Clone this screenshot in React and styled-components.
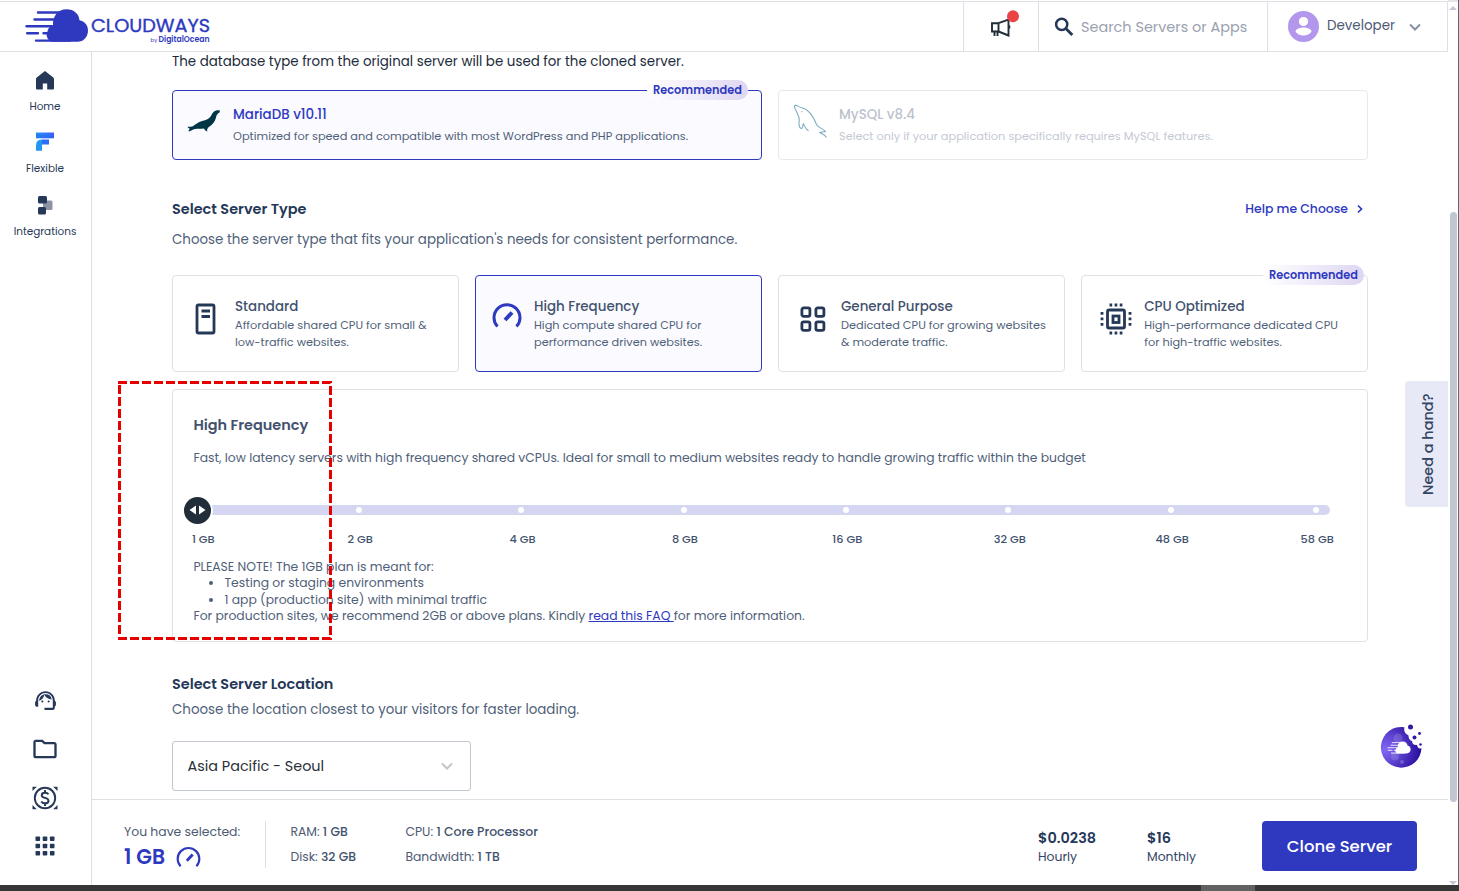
import React from "react";
import styled, { createGlobalStyle } from "styled-components";
import { MdSupportAgent, MdOutlineFolder } from "react-icons/md";

const GlobalStyle = createGlobalStyle`
  * {
    box-sizing: border-box;
  }

  body {
    margin: 0;
    background-color: #ffffff;
    font-family: Poppins, Inter, "Open Sans", sans-serif;
    color: #4d5a73;
  }

  h2, h3, h4, p, ul {
    margin: 0;
    padding: 0;
    font-weight: 400;
  }
`;

const Screen = styled.div`
  display: grid;
  grid-template-columns: 1448px 10px 1px;
  grid-template-rows: 885px 6px;
  width: 1459px;
  height: 891px;
  overflow: hidden;
`;

const Page = styled.div`
  display: flex;
  flex-direction: column;
  position: relative;
  border-top: 1px solid #ffffff;
`;

const Scrollbar = styled.div`
  display: flex;
  flex-direction: column;
  align-items: center;
  border-top: 2px solid #e4e5e9;
  padding-top: 4px;
`;

const ArrowUp = styled.div`
  border: 4px solid transparent;
  border-top: 0;
  border-bottom: 4px solid #c1c7d0;
`;

const ArrowDown = styled(ArrowUp)`
  margin-top: auto;
  transform: rotate(180deg);
`;

const Thumb = styled.div`
  width: 7px;
  height: 590px;
  margin-top: 202px;
  border-radius: 4px;
  background-color: #c1c7d0;
`;

const WindowEdge = styled.div`
  background-color: #62666f;
`;

const Taskbar = styled.div`
  grid-column: 1 / -1;
  background-color: #363636;
  padding-left: 1201px;
`;

const TaskbarItem = styled.div`
  width: 54px;
  height: 6px;
  background-color: #626262;
`;

const Header = styled.header`
  display: flex;
  height: 51px;
  flex-shrink: 0;
  border-top: 1px solid #dfe0e5;
  border-bottom: 1px solid #dfe0e5;
`;

const Brand = styled.div`
  flex: 1;
  padding: 2px 0 0 20px;
`;

const HeaderCell = styled.div`
  display: flex;
  align-items: center;
  width: ${(props) => props.$width}px;
  border-left: 1px solid #dfe0e5;
  padding-left: ${(props) => props.$pad}px;
`;

const SearchHint = styled.span`
  margin-left: 7px;
  font-size: 14.45px;
  line-height: 22px;
  color: #9aa1b0;
`;

const UserName = styled.span`
  width: 68px;
  margin: 0 14px 2px 8px;
  font-size: 13.44px;
  white-space: nowrap;
`;

const Body = styled.div`
  display: flex;
  flex: 1;
  min-height: 0;
`;

const Sidebar = styled.nav`
  display: flex;
  flex-direction: column;
  justify-content: space-between;
  width: 92px;
  padding-right: 1px;
  border-right: 1px solid #dfe0e5;
`;

const NavTop = styled.div`
  display: flex;
  flex-direction: column;
  padding-top: 16px;
`;

const NavItem = styled.a`
  display: flex;
  flex-direction: column;
  align-items: center;
  height: 62.3px;
  font-size: 10.45px;
  line-height: 16px;
  color: #253858;

  svg {
    margin-bottom: 7px;
  }
`;

const NavBottom = styled.div`
  display: flex;
  flex-direction: column;
  align-items: center;
  height: 198.6px;
  color: #253858;
`;

const NavIcon = styled.a`
  display: flex;
  align-items: center;
  justify-content: center;
  height: 28px;
  margin-bottom: 20.6px;
`;

const Column = styled.div`
  display: flex;
  flex-direction: column;
  width: 1356px;
`;

const Main = styled.main`
  height: 747px;
  padding: 0 80px;
  overflow: hidden;
`;

const Intro = styled.p`
  height: 38px;
  padding-top: 1px;
  font-size: 13.42px;
  line-height: 18px;
  color: #222b3a;
`;

const CardRow = styled.div`
  display: grid;
  grid-template-columns: repeat(${(props) => props.$columns}, 1fr);
  gap: 16px;
`;

const Card = styled.div`
  position: relative;
  display: flex;
  min-width: 0;
  border: 1px solid ${(props) => (props.$active ? "#2e39bf" : "#dfe1e6")};
  border-radius: 4px;
  background-color: ${(props) => (props.$active ? "#fafaff" : "#ffffff")};
`;

const DatabaseCard = styled(Card)`
  height: 70px;
  padding: 14px 0 0 ${(props) => props.$pad}px;
  gap: ${(props) => props.$gap}px;
  border-color: ${(props) => (props.$disabled ? "#e6e8ec" : "#2e39bf")};

  & > svg {
    margin-top: ${(props) => props.$iconTop}px;
    opacity: ${(props) => (props.$disabled ? 0.8 : 1)};
  }
`;

const TypeCard = styled(Card)`
  height: 97px;
  padding: 21px 0 0 ${(props) => props.$pad}px;
  gap: ${(props) => props.$gap}px;

  & > svg {
    flex-shrink: 0;
    margin-top: ${(props) => props.$iconTop}px;
  }
`;

const Badge = styled.span`
  position: absolute;
  top: -11px;
  right: ${(props) => props.$right}px;
  width: 101px;
  height: 20px;
  padding-left: 6px;
  border-radius: 10px;
  background: linear-gradient(90deg, #ffffff, #ded6f2);
  font-size: 11.34px;
  font-weight: 600;
  line-height: 20px;
  color: #2e39bf;
`;

const CardTitle = styled.h4`
  font-size: 13.42px;
  font-weight: 500;
  line-height: 20px;
  white-space: nowrap;
  color: ${(props) => props.$color || "#42526e"};
`;

const CardText = styled.p`
  margin-top: ${(props) => props.$top || 0}px;
  font-size: 11.34px;
  line-height: 17px;
  white-space: nowrap;
  color: ${(props) => props.$color || "#505f79"};
`;

const SectionHead = styled.div`
  display: flex;
  justify-content: space-between;
  align-items: center;
  height: 24px;
  margin-top: ${(props) => props.$top}px;
`;

const SectionTitle = styled.h2`
  font-size: 14.45px;
  font-weight: 600;
  color: #253858;
`;

const SectionText = styled.p`
  margin: ${(props) => props.$margin};
  font-size: 13.42px;
  line-height: 20px;
  color: #505f79;
`;

const HelpLink = styled.a`
  display: flex;
  align-items: center;
  gap: 9px;
  padding-right: 5px;
  font-size: 12.4px;
  font-weight: 500;
  color: #2e39bf;
`;

const Panel = styled.section`
  height: 253px;
  margin-top: 17px;
  padding: 23px 0 0 20.4px;
  border: 1px solid #dfe1e6;
  border-radius: 4px;
`;

const PanelTitle = styled.h3`
  font-size: 14.45px;
  font-weight: 600;
  line-height: 24px;
  color: #42526e;
`;

const PanelText = styled.p`
  margin-top: 11px;
  font-size: 12.38px;
  line-height: 20px;
  color: #505f79;
`;

const Track = styled.div`
  display: grid;
  grid-template-columns: repeat(6, 162.4px) 145px 17px;
  grid-template-rows: 10px;
  align-items: center;
  width: 1137px;
  height: 10px;
  margin-top: 37px;
  border-radius: 5px;
  background-color: #d5d6f2;
`;

const Stop = styled.span`
  width: 6px;
  height: 6px;
  border-radius: 50%;
  background-color: #ffffff;
`;

const Handle = styled.span`
  display: flex;
  align-items: center;
  justify-content: center;
  gap: 3px;
  width: 27px;
  height: 27px;
  margin-left: -9.4px;
  border-radius: 50%;
  background-color: #212d38;
  box-shadow: 1px 0 0 1px #ffffff;
`;

const Labels = styled.div`
  display: grid;
  grid-template-columns: repeat(6, 162.4px) 145px 48px;
  margin: 14px 0 0 -19.6px;
  font-size: 11.34px;
  font-weight: 500;
  line-height: 20px;
  color: #42526e;
`;

const Label = styled.span`
  width: 48px;
  text-align: center;

  &:first-child {
    padding-left: 11px;
  }
`;

const Note = styled.div`
  margin-top: 10px;
  font-size: 12.38px;
  line-height: 16.4px;
  color: #505f79;

  ul {
    padding-left: 31px;
  }

  a {
    color: #2e39bf;
    text-decoration: underline;
  }
`;

const Select = styled.div`
  display: flex;
  align-items: center;
  justify-content: space-between;
  width: 299px;
  height: 50px;
  padding: 0 16px 0 14.5px;
  border: 1px solid #c1c7d0;
  border-radius: 3px;
  font-size: 14.4px;
  color: #2b2f38;
`;

const Footer = styled.footer`
  display: flex;
  height: 86px;
  border-top: 1px solid #dfe0e5;
  padding: 21px 31px 0 32px;
`;

const Selected = styled.div`
  width: 142px;
  height: 47px;
  border-right: 1px solid #dfe0e5;
  font-size: 12.38px;
  line-height: 22px;
`;

const Plan = styled.div`
  display: flex;
  align-items: center;
  gap: 10.5px;
  margin-top: 1px;
  font-size: 20.4px;
  font-weight: 600;
  line-height: 26px;
  color: #2e39bf;
`;

const Specs = styled.div`
  display: flex;
  flex-direction: column;
  gap: 3px;
  width: ${(props) => props.$width}px;
  padding-left: ${(props) => props.$pad}px;
  font-size: 12.38px;
  line-height: 22px;

  b {
    font-weight: 500;
    color: #42526e;
  }
`;

const Price = styled.div`
  width: ${(props) => props.$width}px;
  padding-top: 8px;
  font-size: 12.38px;
  line-height: 17px;
  color: #344563;

  b {
    display: block;
    font-size: 14.45px;
    font-weight: 600;
    line-height: 19px;
    color: #253858;
  }
`;

const CloneButton = styled.button`
  width: 155px;
  height: 50px;
  border: 0;
  border-radius: 4px;
  background-color: #2e39bf;
  color: #ffffff;
  font-family: inherit;
  font-size: 16.5px;
  font-weight: 500;
`;

/* rotated by half a turn, so the text reads from the bottom up */
const HelpTab = styled.button`
  position: absolute;
  top: 380px;
  right: 0;
  width: 43px;
  height: 126px;
  padding: 0 3px 0 0;
  border: 0;
  border-radius: 0 4px 4px 0;
  background-color: #e8e9f7;
  color: #344563;
  font-family: inherit;
  font-size: 14.45px;
  font-weight: 500;
  writing-mode: vertical-rl;
  transform: rotate(180deg);
`;

const CookieButton = styled.div`
  position: absolute;
  top: 721px;
  left: 1380px;
  line-height: 0;
`;

const Highlight = styled.svg`
  position: absolute;
  top: 380px;
  left: 118px;
  pointer-events: none;
`;

function CloudShape() {
  return (
    <>
      <path d="M32 37.8 C27 36 25.500 31 27.500 27.500 C28 25 29 22.500 33 21.500 C32.500 12 38 5.300 46.500 5.300 C54 5.300 59 10 59.500 16.200 C64.500 17 68 21 68 26.500 C68 33 63.500 37.800 57.500 37.800 H32 Z" />
      <g fill="none" stroke="currentColor" strokeWidth="2.400" strokeLinecap="round">
        <path d="M18 8.500H40M14.500 15.500H36M6.500 22.300H32M7.200 29.200H18M23.500 29.200H30M16 36.600H50" />
      </g>
    </>
  );
}

function Logo() {
  return (
    <svg width="200" height="44" viewBox="0 0 200 44" fill="#2e39bf" color="#2e39bf">
      <CloudShape />
      <text x="71" y="28" fontFamily="Poppins" fontSize="18.500" stroke="#2e39bf" strokeWidth="0.350" textLength="119" lengthAdjust="spacingAndGlyphs">
        CLOUDWAYS
      </text>
      <text x="130.500" y="37.500" fontFamily="Poppins" fontSize="5.500">
        by
      </text>
      <text x="138.500" y="37.500" fontFamily="Poppins" fontSize="7.800" fontWeight="600" textLength="51" lengthAdjust="spacingAndGlyphs">
        DigitalOcean
      </text>
    </svg>
  );
}

function SearchIcon() {
  return (
    <svg width="20" height="20" viewBox="0 0 20 20" fill="none" stroke="#253858" strokeWidth="2.500">
      <circle cx="7.700" cy="7.300" r="5.600" />
      <path d="M11.800 11.500L18.300 18" strokeWidth="2.800" />
    </svg>
  );
}

function Gauge({ size, weight }) {
  return (
    <svg width={size} height={size} viewBox="0 0 30 30" fill="none" stroke="#2e39bf" strokeWidth={weight}>
      <path d="M5.500 25.500A13 13 0 1 1 24.500 25.500" />
      <path d="M13 19L20 11.500" strokeWidth={weight * 1.3} />
    </svg>
  );
}

function Chevron({ color, width = 12, stroke = 2 }) {
  return (
    <svg width={width} height="8" viewBox="0 0 12 8" fill="none" stroke={color} strokeWidth={stroke}>
      <path d="M1 1.500L6 6.500L11 1.500" />
    </svg>
  );
}

function HomeIcon() {
  return (
    <svg width="20" height="24" viewBox="0 0 20 24" fill="#253858">
      <path d="M10 3L18.300 9.500Q19 10 19 11V20.500Q19 21.500 18 21.500H12.200V15.500H7.800V21.500H2Q1 21.500 1 20.500V11Q1 10 1.700 9.500Z" />
    </svg>
  );
}

function FlexibleIcon() {
  return (
    <svg width="20" height="24" viewBox="0 0 20 24">
      <defs>
        <linearGradient id="flex" x1="0" x2="1">
          <stop offset="0" stopColor="#1f9cf5" />
          <stop offset="1" stopColor="#3b5bfa" />
        </linearGradient>
      </defs>
      <path d="M1 2.500H19V8.200H1Z" fill="url(#flex)" />
      <path d="M1 3.500L19 7V8.200H1Z" fill="#2a6bf0" opacity="0.600" />
      <path d="M7 9.500H14V14.500H7Z" fill="#2b6df5" />
      <path d="M7 9.500V20.800H1V15.500Q1 9.500 7 9.500Z" fill="#2196f3" />
    </svg>
  );
}

function IntegrationsIcon() {
  return (
    <svg width="20" height="24" viewBox="0 0 20 24">
      <rect x="8" y="7.500" width="9.500" height="9.500" rx="1.500" fill="#8b93a5" />
      <rect x="3" y="3" width="9" height="7.500" rx="1.500" fill="#253858" />
      <rect x="3" y="14" width="8" height="7.500" rx="1.500" fill="#253858" />
    </svg>
  );
}

function BillingIcon() {
  return (
    <svg width="26" height="26" viewBox="0 0 26 26" fill="none" stroke="#253858" strokeWidth="1.900">
      <circle cx="13" cy="13" r="10.200" />
      <path d="M16.500 9.300Q15.500 7.700 13 7.700Q9.700 7.700 9.700 10.200Q9.700 12.200 13 12.900Q16.500 13.700 16.500 15.900Q16.500 18.300 13 18.300Q10.300 18.300 9.300 16.500M13 5V7.800M13 18.200V21" />
      <path d="M0.500 1.800H4.800L0.500 6ZM25.500 1.800H21.200L25.500 6ZM0.500 24.200H4.800L0.500 20ZM25.500 24.200H21.200L25.500 20Z" fill="#253858" stroke="none" />
    </svg>
  );
}

function AppsIcon() {
  return (
    <svg width="20" height="20" viewBox="0 0 20 20" fill="#253858">
      {[0.5, 7.7, 14.9].map((y) =>
        [0.5, 7.7, 14.9].map((x) => <rect key={`${x}-${y}`} x={x} y={y} width="4.600" height="4.600" rx="0.800" />)
      )}
    </svg>
  );
}

function SealIcon() {
  return (
    <svg width="34" height="26" viewBox="0 0 34 26" fill="#003545">
      <path d="M33 1.500C30 0.500 26.500 1.500 25 5C23.500 8.500 21.500 10.200 18 11.200C14 12.300 10.500 13.500 7.500 16C5.500 17.800 4 18 0.500 17.800C1 19 2.300 19.600 3 19.800C2 20.500 1.500 21.300 1.700 22.500C4 22.300 5.500 20.500 8 20C11 19.700 14 20 17 19.500C17.500 21 19 22 20.500 22.600C19.700 21.200 20 20 21.500 18.200C25.500 16 28 12.500 29 8.500C29.500 6 30.500 4.500 32.500 3.500Z" />
    </svg>
  );
}

function DolphinIcon() {
  return (
    <svg width="34" height="36" viewBox="0 0 34 36" fill="none" stroke="#5b9ab0" strokeWidth="1.100" strokeLinejoin="round">
      <path d="M32.500 33.500C31 31 29 30 25.500 28.500L31.500 27.500C28 24 24.500 23.500 22.800 21C20 14 16 5.500 8 3.800C5 3.500 3.500 1 1 1.200C0 2.500 1.200 5.500 2.500 7.500C4.500 11.500 5.700 13.500 5.200 17C4.500 21 5.500 24.500 7.500 24.500C9 24 9 21.500 9.200 19.500C10.500 22 11.500 25 14.500 27" />
      <path d="M7.500 7.300L8.300 8" />
    </svg>
  );
}

function StandardIcon() {
  return (
    <svg width="22" height="32" viewBox="0 0 22 32" fill="none" stroke="#253858" strokeWidth="2.800">
      <rect x="2" y="2" width="17" height="28" rx="1.500" />
      <path d="M6.500 8H15M6.500 13.500H15" />
    </svg>
  );
}

function GeneralIcon() {
  return (
    <svg width="26" height="28" viewBox="0 0 26 28" fill="none" stroke="#253858" strokeWidth="2.800">
      <rect x="1.900" y="2.900" width="8" height="8.500" rx="1.800" />
      <rect x="15.900" y="2.900" width="8" height="8.500" rx="1.800" />
      <rect x="1.900" y="16.800" width="8" height="8.500" rx="1.800" />
      <rect x="15.900" y="16.800" width="8" height="8.500" rx="1.800" />
    </svg>
  );
}

function CpuIcon() {
  return (
    <svg width="32" height="32" viewBox="0 0 32 32" fill="none" stroke="#253858" strokeWidth="2.800">
      <rect x="7.500" y="7" width="17" height="18" rx="1.500" />
      <rect x="13" y="13" width="6" height="6.500" />
      <path d="M9.500 2H22.500M9.500 30H22.500" strokeDasharray="2.700 2.400" />
      <path d="M2 9V23M30 9V23" strokeDasharray="2.700 2.800" />
    </svg>
  );
}

function MegaphoneIcon() {
  return (
    <svg width="32" height="36" viewBox="0 0 32 36" fill="none" stroke="#212d38" strokeWidth="1.900">
      <path d="M4 14.200H10.500V22.500H4ZM10.500 14.200L20.500 10.500V26.500L10.500 22.500M6.500 22.500V27M9.500 22.500V27M21.300 16.500V19.500" />
      <circle cx="25" cy="7.300" r="6" fill="#e94545" stroke="none" />
    </svg>
  );
}

function Avatar() {
  return (
    <svg width="31" height="31" viewBox="0 0 31 31" fill="#ffffff">
      <circle cx="15.500" cy="15.500" r="15.500" fill="#b297ec" />
      <circle cx="15.500" cy="10.500" r="4.600" />
      <path d="M7.500 20.500C8 17.500 12.500 16.500 15.500 16.500S23 17.500 23.500 20.500C22 23 19 24.500 15.500 24.500S9 23 7.500 20.500Z" />
    </svg>
  );
}

function CookieIcon() {
  return (
    <svg width="44" height="46" viewBox="0 0 44 46" fill="#2f1aa0">
      <defs>
        <radialGradient id="cookie" cx="0.100" cy="0.550" r="0.850">
          <stop offset="0" stopColor="#8468f5" />
          <stop offset="1" stopColor="#2c10a0" />
        </radialGradient>
      </defs>
      <path d="M24.500 5.300A20.300 20.300 0 1 0 41.500 26C39 27.500 37.500 25.500 37 23C34 23.500 32 21.500 32 19C29.500 18 28.500 16.500 28.500 13.500C25 12 23.500 8.500 24.500 5.300Z" fill="url(#cookie)" />
      <circle cx="18" cy="16" r="4.500" fill="#ffffff" opacity="0.150" />
      <circle cx="15" cy="34.500" r="4" fill="#ffffff" opacity="0.150" />
      <circle cx="22" cy="40" r="2" fill="#ffffff" opacity="0.200" />
      <circle cx="30.500" cy="5" r="2.500" />
      <circle cx="39.500" cy="11.500" r="1.400" />
      <circle cx="34.500" cy="15.500" r="2" />
      <circle cx="40.500" cy="22.500" r="1.300" />
      <g transform="translate(5.500 17.500) scale(0.370)" fill="#ffffff" color="#ffffff">
        <CloudShape />
      </g>
    </svg>
  );
}

const serverTypes = [
  { title: "Standard", lines: ["Affordable shared CPU for small &", "low-traffic websites."], icon: <StandardIcon />, pad: 22, gap: 18, iconTop: 6 },
  { title: "High Frequency", lines: ["High compute shared CPU for", "performance driven websites."], icon: <Gauge size={30} weight={3} />, pad: 15.5, gap: 12.5, iconTop: 4, active: true },
  { title: "General Purpose", lines: ["Dedicated CPU for growing websites", "& moderate traffic."], icon: <GeneralIcon />, pad: 20.5, gap: 15.5, iconTop: 8 },
  { title: "CPU Optimized", lines: ["High-performance dedicated CPU", "for high-traffic websites."], icon: <CpuIcon />, pad: 17.5, gap: 12.7, iconTop: 6, recommended: true },
];

const sizes = ["1 GB", "2 GB", "4 GB", "8 GB", "16 GB", "32 GB", "48 GB", "58 GB"];

function App() {
  return (
    <Screen>
      <GlobalStyle />
      <Page>
        <Header>
          <Brand>
            <Logo />
          </Brand>
          <HeaderCell $width={75} $pad={24}>
            <MegaphoneIcon />
          </HeaderCell>
          <HeaderCell $width={229} $pad={15}>
            <SearchIcon />
            <SearchHint>Search Servers or Apps</SearchHint>
          </HeaderCell>
          <HeaderCell $width={180} $pad={20}>
            <Avatar />
            <UserName>Developer</UserName>
            <Chevron color="#8891a3" />
          </HeaderCell>
          <HeaderCell $width={1} $pad={0} />
        </Header>
        <Body>
          <Sidebar>
            <NavTop>
              <NavItem>
                <HomeIcon />
                Home
              </NavItem>
              <NavItem>
                <FlexibleIcon />
                Flexible
              </NavItem>
              <NavItem>
                <IntegrationsIcon />
                Integrations
              </NavItem>
            </NavTop>
            <NavBottom>
              <NavIcon>
                <MdSupportAgent size={25} />
              </NavIcon>
              <NavIcon>
                <MdOutlineFolder size={28} />
              </NavIcon>
              <NavIcon>
                <BillingIcon />
              </NavIcon>
              <NavIcon>
                <AppsIcon />
              </NavIcon>
            </NavBottom>
          </Sidebar>
          <Column>
            <Main>
              <Intro>The database type from the original server will be used for the cloned server.</Intro>
              <CardRow $columns={2}>
                <DatabaseCard $active $pad={14} $gap={12} $iconTop={4}>
                  <SealIcon />
                  <div>
                    <CardTitle $color="#2e39bf">MariaDB v10.11</CardTitle>
                    <CardText $top={3}>Optimized for speed and compatible with most WordPress and PHP applications.</CardText>
                  </div>
                  <Badge $right={13}>Recommended</Badge>
                </DatabaseCard>
                <DatabaseCard $disabled $pad={15} $gap={11} $iconTop={-1}>
                  <DolphinIcon />
                  <div>
                    <CardTitle $color="#bcc2ce">MySQL v8.4</CardTitle>
                    <CardText $top={3} $color="#c4c9d3">
                      Select only if your application specifically requires MySQL features.
                    </CardText>
                  </div>
                </DatabaseCard>
              </CardRow>
              <SectionHead $top={37}>
                <SectionTitle>Select Server Type</SectionTitle>
                <HelpLink>
                  Help me Choose
                  <svg width="6" height="10" viewBox="0 0 6 10" fill="none" stroke="#2e39bf" strokeWidth="1.700">
                    <path d="M1 1.500L4.500 5L1 8.500" />
                  </svg>
                </HelpLink>
              </SectionHead>
              <SectionText $margin="8.500px 0 25.500px">
                Choose the server type that fits your application's needs for consistent performance.
              </SectionText>
              <CardRow $columns={4}>
                {serverTypes.map((type) => (
                  <TypeCard key={type.title} $active={type.active} $pad={type.pad} $gap={type.gap} $iconTop={type.iconTop}>
                    {type.icon}
                    <div>
                      <CardTitle>{type.title}</CardTitle>
                      {type.lines.map((line) => (
                        <CardText key={line}>{line}</CardText>
                      ))}
                    </div>
                    {type.recommended && <Badge $right={3}>Recommended</Badge>}
                  </TypeCard>
                ))}
              </CardRow>
              <Panel>
                <PanelTitle>High Frequency</PanelTitle>
                <PanelText>
                  Fast, low latency servers with high frequency shared vCPUs. Ideal for small to medium websites ready to handle growing traffic within the budget
                </PanelText>
                <Track>
                  <Handle>
                    <svg width="17" height="10" viewBox="0 0 17 10" fill="#ffffff">
                      <path d="M7 0.500V9.500L0.500 5ZM10 0.500V9.500L16.500 5Z" />
                    </svg>
                  </Handle>
                  {sizes.slice(1).map((size) => (
                    <Stop key={size} />
                  ))}
                </Track>
                <Labels>
                  {sizes.map((size) => (
                    <Label key={size}>{size}</Label>
                  ))}
                </Labels>
                <Note>
                  <p>PLEASE NOTE! The 1GB plan is meant for:</p>
                  <ul>
                    <li>Testing or staging environments</li>
                    <li>1 app (production site) with minimal traffic</li>
                  </ul>
                  <p>
                    For production sites, we recommend 2GB or above plans. Kindly <a>read this FAQ </a>for more information.
                  </p>
                </Note>
              </Panel>
              <SectionHead $top={30}>
                <SectionTitle>Select Server Location</SectionTitle>
              </SectionHead>
              <SectionText $margin="3.500px 0 21.500px">Choose the location closest to your visitors for faster loading.</SectionText>
              <Select>
                Asia Pacific - Seoul
                <Chevron color="#c4c4c8" width={14} />
              </Select>
            </Main>
            <Footer>
              <Selected>
                You have selected:
                <Plan>
                  1 GB <Gauge size={25} weight={2.6} />
                </Plan>
              </Selected>
              <Specs $width={139} $pad={24.4}>
                <span>RAM: <b>1 GB</b></span>
                <span>Disk: <b>32 GB</b></span>
              </Specs>
              <Specs $width={633} $pad={0.4}>
                <span>CPU: <b>1 Core Processor</b></span>
                <span>Bandwidth: <b>1 TB</b></span>
              </Specs>
              <Price $width={109}>
                <b>$0.0238</b>
                Hourly
              </Price>
              <Price $width={115}>
                <b>$16</b>
                Monthly
              </Price>
              <CloneButton>Clone Server</CloneButton>
            </Footer>
          </Column>
        </Body>
        <HelpTab>Need a hand?</HelpTab>
        <CookieButton>
          <CookieIcon />
        </CookieButton>
        <Highlight width="216" height="262" fill="none">
          <path d="M0 1.500H212.500V257.500H1.500V1.500" stroke="#e60000" strokeWidth="3" strokeDasharray="9 3" />
        </Highlight>
      </Page>
      <Scrollbar>
        <ArrowUp />
        <Thumb />
        <ArrowDown />
      </Scrollbar>
      <WindowEdge />
      <Taskbar>
        <TaskbarItem />
      </Taskbar>
    </Screen>
  );
}

export default App;
